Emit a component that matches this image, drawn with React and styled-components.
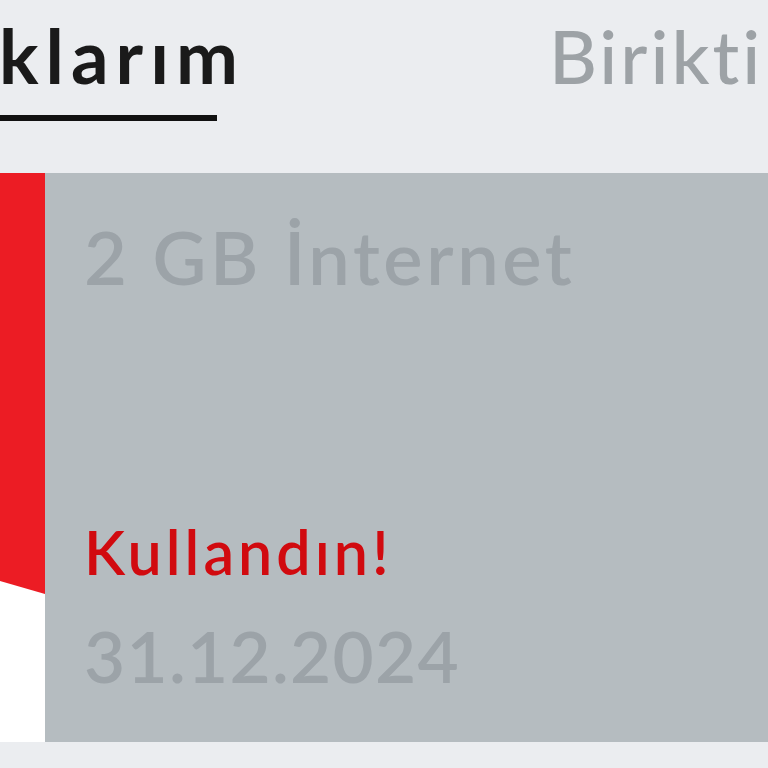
import React from 'react'
import styled, { createGlobalStyle } from 'styled-components'

const GlobalStyle = createGlobalStyle`
    html, body {
        margin: 0;
        padding: 0;
        overflow: hidden;
        background: #ebedf0;
    }
    body {
        font-family: Lato, "Open Sans", "Liberation Sans", sans-serif;
    }
`

const Page = styled.div`
    width: 768px;
    height: 768px;
    overflow: hidden;
    background: #ebedf0;
`

const TabBar = styled.div`
    display: flex;
    align-items: flex-start;
    gap: 311px;
    height: 173px;
    padding-top: 19px;
    box-sizing: border-box;
`

const TabSlot = styled.div`
    display: flex;
    justify-content: flex-end;
    width: ${(p) => p.width || 'auto'};
    flex-shrink: 0;
`

const Tab = styled.div`
    position: relative;
    font-size: 74px;
    line-height: 1;
    font-weight: ${(p) => (p.active ? 700 : 500)};
    letter-spacing: ${(p) => (p.active ? '7px' : '3px')};
    margin-right: ${(p) => (p.active ? '-7px' : '0')};
    color: ${(p) => (p.active ? '#1a1a1a' : '#9da2a6')};
    white-space: nowrap;

    &::after {
        content: '';
        display: ${(p) => (p.active ? 'block' : 'none')};
        position: absolute;
        left: 0;
        right: 28px;
        bottom: -28px;
        height: 6px;
        background: #111;
    }
`

const Card = styled.div`
    display: flex;
    height: 569px;
`

const Stripe = styled.div`
    width: 45px;
    flex-shrink: 0;
    background: #ffffff;
`

const StripeRed = styled.div`
    height: 421px;
    background: #ec1c24;
    clip-path: polygon(0 0, 100% 0, 100% 100%, 0 calc(100% - 13px));
`

const Body = styled.div`
    flex: 1;
    display: flex;
    flex-direction: column;
    background: #b5bcc0;
    padding: 47px 0 51px 39px;
`

const Title = styled.div`
    font-size: 74px;
    line-height: 1;
    font-weight: 600;
    letter-spacing: 3.6px;
    color: #9ca3a8;
    white-space: nowrap;
`

const Status = styled.div`
    margin-top: auto;
    font-size: 61px;
    line-height: 1;
    font-weight: 600;
    letter-spacing: 4px;
    color: #d10a0f;
    white-space: nowrap;
`

const DateText = styled.div`
    margin-top: 38px;
    font-size: 71px;
    line-height: 1;
    font-weight: 600;
    letter-spacing: 1.3px;
    color: #9ca3a8;
    white-space: nowrap;
`

const App = () => {
    return (
        <Page>
            <GlobalStyle />
            <TabBar>
                <TabSlot width='238px'>
                    <Tab active>Kazandıklarım</Tab>
                </TabSlot>
                <TabSlot>
                    <Tab>Biriktirdiklerim</Tab>
                </TabSlot>
            </TabBar>
            <Card>
                <Stripe>
                    <StripeRed />
                </Stripe>
                <Body>
                    <Title>2 GB İnternet</Title>
                    <Status>Kullandın!</Status>
                    <DateText>31.12.2024</DateText>
                </Body>
            </Card>
        </Page>
    )
}

export default App
